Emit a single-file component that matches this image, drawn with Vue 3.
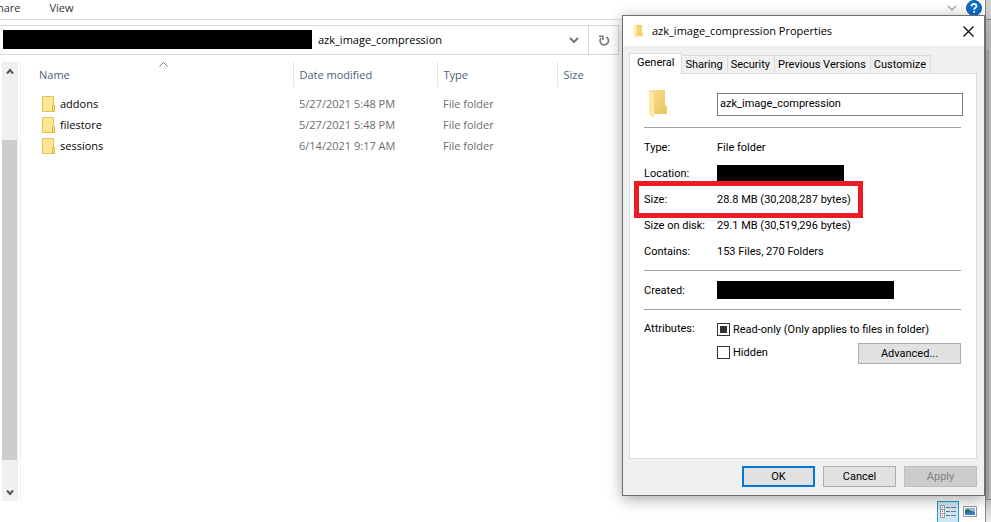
<script setup>
import { ref } from 'vue'

const files = [
  { name: 'addons', date: '5/27/2021 5:48 PM', type: 'File folder' },
  { name: 'filestore', date: '5/27/2021 5:48 PM', type: 'File folder' },
  { name: 'sessions', date: '6/14/2021 9:17 AM', type: 'File folder' },
]
const tabs = ['General', 'Sharing', 'Security', 'Previous Versions', 'Customize']
const activeTab = ref('General')
const folderName = ref('azk_image_compression')
const hidden = ref(false)
</script>

<template>
  <div class="desktop">
    <main class="explorer">
      <nav class="ribbon">
        <a href="#" class="share">hare</a>
        <a href="#">View</a>
        <span class="ribbon-tools">
          <svg width="10" height="6" viewBox="0 0 10 6"><path d="M1 1l4 4 4-4" fill="none" stroke="#a8a8a8" stroke-width="1.5" /></svg>
          <svg width="16" height="16" viewBox="0 0 16 16">
            <circle cx="8" cy="8" r="7.5" fill="#0b6fcb" stroke="#0858a8" />
            <path d="M5.6 6.2C5.6 3.3 10.5 3.3 10.5 6c0 1.8-2.4 1.8-2.4 3.7M8.1 10.9v1.9" fill="none" stroke="#fff" stroke-width="1.8" />
          </svg>
        </span>
      </nav>

      <div class="address-row">
        <div class="address">
          <span class="redacted path"></span>
          <span class="crumb">azk_image_compression</span>
          <svg class="drop" width="10" height="7" viewBox="0 0 10 7"><path d="M1 1l4 4 4-4" fill="none" stroke="#777" stroke-width="2" /></svg>
          <button class="refresh" aria-label="Refresh">
            <svg width="12" height="13" viewBox="0 0 12 13">
              <path d="M8.300 3A4.200 4.200 0 1 1 3 4" fill="none" stroke="#777" stroke-width="1.600" />
              <path d="M1 2.300h4v4" fill="none" stroke="#777" stroke-width="1.600" />
            </svg>
          </button>
        </div>
      </div>

      <div class="content">
        <div class="scrollbar">
          <svg width="8" height="7" viewBox="0 0 8 7"><path d="M1 5.500l3-3.500 3 3.500" fill="none" stroke="#555" stroke-width="2" /></svg>
          <span class="thumb"></span>
          <svg width="8" height="7" viewBox="0 0 8 7"><path d="M1 1.500l3 3.500 3-3.500" fill="none" stroke="#555" stroke-width="2" /></svg>
        </div>
        <div class="list">
          <table>
            <colgroup><col class="c-name" /><col class="c-date" /><col class="c-type" /><col /></colgroup>
            <thead>
              <tr>
                <th class="sorted">
                  Name
                  <svg class="sort" width="9" height="5" viewBox="0 0 9 5"><path d="M.5 4.500l4-4 4 4" fill="none" stroke="#777" /></svg>
                </th>
                <th>Date modified</th><th>Type</th><th>Size</th>
              </tr>
            </thead>
            <tbody>
              <tr v-for="f in files" :key="f.name">
                <td>
                  <span class="file">
                    <svg width="13" height="16" viewBox="0 0 13 16">
                      <path d="M.5.5h11v15H.5z" fill="#ffe595" stroke="#e9c24c" />
                      <path d="M10.500 9.500h2v6h-2z" fill="#ffe28a" stroke="#e3b63b" />
                    </svg>
                    {{ f.name }}
                  </span>
                </td>
                <td>{{ f.date }}</td><td>{{ f.type }}</td><td></td>
              </tr>
            </tbody>
          </table>
        </div>
      </div>

      <footer class="status">
        <button class="view on" aria-label="Details">
          <svg width="16" height="14" viewBox="0 0 16 14">
            <path d="M.5.5h4v12h-4zM.5 4.500h4M.5 8.500h4" fill="#fff" stroke="#999" />
            <path d="M6 2.500h4m1 0h5M6 6.500h4m1 0h5M6 10.500h4m1 0h5" stroke="#777" />
            <path d="M2 2h1v1H2z" fill="#555" /><path d="M2 6h1v1H2z" fill="#2875d0" /><path d="M2 10h1v1H2z" fill="#d33" />
          </svg>
        </button>
        <button class="view" aria-label="Large icons">
          <svg width="14" height="11" viewBox="0 0 14 11">
            <path d="M.5.5h13v10H.5z" fill="#fff" stroke="#999" />
            <path d="M2 2h10v7H2z" fill="#8fc0ee" /><path d="M2 4l3-1 3 2 4 1v1H2z" fill="#3d6d68" /><path d="M2 7l10-1v3H2z" fill="#3a7fc9" />
          </svg>
        </button>
      </footer>
    </main>

    <aside class="behind"><span class="behind-top"></span><span class="behind-line"></span><span class="behind-body"></span><span class="behind-foot"></span></aside>

    <section class="dialog" role="dialog" aria-labelledby="dlg-title">
      <header class="titlebar">
        <svg width="9" height="13" viewBox="0 0 18 28" preserveAspectRatio="none">
          <path d="M3 0h13v16l2 2v6H5z" fill="#f5d272" /><path d="M0 0l6 4v24l-6-4z" fill="#ffe9a8" />
        </svg>
        <h1 id="dlg-title">azk_image_compression Properties</h1>
        <button class="close" aria-label="Close">
          <svg width="11" height="11" viewBox="0 0 11 11"><path d="M.5.5l10 10M10.500.5l-10 10" stroke="#000" stroke-width="1.200" /></svg>
        </button>
      </header>

      <div class="tabs" role="tablist">
        <button v-for="t in tabs" :key="t" role="tab" :class="{ active: t === activeTab }" @click="activeTab = t">{{ t }}</button>
      </div>

      <div class="panel">
        <div class="name-row">
          <svg width="19" height="28" viewBox="0 0 19 28">
            <defs><linearGradient id="fold" x2="1" y2="1"><stop stop-color="#fae08e" /><stop offset="1" stop-color="#eac45d" /></linearGradient></defs>
            <path d="M1 0h15v15l2 2v7H5z" fill="url(#fold)" /><path d="M0 0l5 4v24l-5-4z" fill="#ffe8a6" />
          </svg>
          <input v-model="folderName" type="text" aria-label="Folder name" />
        </div>
        <hr />
        <dl>
          <div><dt>Type:</dt><dd>File folder</dd></div>
          <div><dt>Location:</dt><dd class="redacted location"></dd></div>
          <div class="marked"><dt>Size:</dt><dd>28.8 MB (30,208,287 bytes)</dd></div>
          <div><dt>Size on disk:</dt><dd>29.1 MB (30,519,296 bytes)</dd></div>
          <div><dt>Contains:</dt><dd>153 Files, 270 Folders</dd></div>
        </dl>
        <hr />
        <dl><div><dt>Created:</dt><dd class="redacted created"></dd></div></dl>
        <hr />
        <div class="attributes">
          <span class="attr-label">Attributes:</span>
          <div class="checks">
            <label><input type="checkbox" :indeterminate.prop="true" />Read-only (Only applies to files in folder)</label>
            <div class="hidden-row">
              <label><input v-model="hidden" type="checkbox" />Hidden</label>
              <button class="btn advanced">Advanced...</button>
            </div>
          </div>
        </div>
      </div>

      <div class="actions">
        <button class="btn default">OK</button>
        <button class="btn">Cancel</button>
        <button class="btn" disabled>Apply</button>
      </div>
    </section>
  </div>
</template>

<style>
body { margin: 0; background: #fff; }
</style>

<style scoped>
*, *::before, *::after { box-sizing: border-box; }
.desktop {
  position: relative; display: flex; min-height: 100vh; overflow: hidden;
  font: 11px/16px "Open Sans", "Noto Sans", sans-serif; color: #000;
}
button, input { font: inherit; color: inherit; margin: 0; }
svg { flex: none; display: block; }
.explorer { flex: 1; display: flex; flex-direction: column; min-width: 0; }
.ribbon { display: flex; align-items: center; gap: 29px; height: 20px; padding-bottom: 4px; border-bottom: 1px solid #dadbdc; }
.ribbon a { color: #333; text-decoration: none; }
.share { margin-left: -3px; }
.ribbon-tools { display: flex; align-items: center; gap: 9px; margin-left: auto; padding-right: 3px; }
.address-row { padding: 5px 366px 7px 0; }
.address { display: flex; align-items: center; height: 30px; border: 1px solid #d9d9d9; border-left: 0; }
.redacted { background: #000; }
.path { width: 309px; height: 19px; margin: 0 6px 2px 3px; }
.crumb { flex: 1; }
.drop { margin-right: 9px; }
.refresh { align-self: stretch; width: 30px; display: grid; place-items: center; border: 0; border-left: 1px solid #d9d9d9; background: #fff; padding: 0; }
.content { flex: 1; display: flex; padding-left: 2px; }
.scrollbar { width: 16px; margin-right: 2px; background: #f0f0f0; display: flex; flex-direction: column; align-items: center; padding: 6px 1px 5px 0; }
.thumb { flex: 1; align-self: stretch; margin: 65px 0 29px; background: #cdcdcd; }
.list { flex: 1; border-left: 1px solid #f0f0f0; }
table { width: 100%; border-collapse: collapse; table-layout: fixed; }
.c-name { width: 272px; }
.c-date { width: 144px; }
.c-type { width: 120px; }
th { position: relative; height: 25px; padding: 0 6px; text-align: left; font-weight: 400; color: #4c607a; border-right: 1px solid #e5e5e5; }
th:last-child { border: 0; }
th:first-child { padding-left: 18px; }
.sort { position: absolute; top: 0; left: 51%; }
tbody::before { content: ""; display: block; height: 6px; }
td { height: 21px; padding: 0 6px; color: #6d6d6d; }
td:first-child { padding-left: 21px; color: #000; }
.file { display: flex; align-items: center; gap: 5px; }
.status { display: flex; align-items: center; justify-content: flex-end; gap: 4px; height: 21px; padding-right: 8px; }
.view { border: 0; background: none; padding: 0; }
.view.on { height: 21px; width: 22px; display: grid; place-items: center; border: 1px solid #2b9acb; border-bottom: 0; background: #cbe8f6; }
.behind { width: 6px; display: flex; flex-direction: column; background: #b0b0b0; border-left: 1px solid #858585; }
.behind-top { height: 19px; background: #d0d0d0; }
.behind-line { height: 31px; background: #c4c4c4; border-top: 1px solid #858585; }
.behind-body { flex: 1; border-right: 2px solid #c4c4c4; }
.behind-foot { height: 23px; background: linear-gradient(#c4c4c4, #ececec); border-top: 1px solid #8a8a8a; }

.dialog {
  position: absolute; top: 15px; right: 6px; width: 363px;
  border: 1px solid #6e6e6e; background: #f0f0f0; box-shadow: 0 3px 14px rgba(0, 0, 0, .35);
  font: 11px/16px Roboto, "Liberation Sans", sans-serif;
}
.titlebar { display: flex; align-items: center; gap: 9px; height: 30px; padding: 0 10px 0 11px; background: #fff; }
h1 { flex: 1; margin: 0; font: 11px/16px "Open Sans", "Noto Sans", sans-serif; }
.close { border: 0; background: none; padding: 0; }
.tabs { display: flex; align-items: flex-end; padding: 7px 6px 0; position: relative; }
.tabs button { height: 18px; padding: 1px 4px 0 3px; border: 1px solid #dcdcdc; border-width: 1px 1px 0 0; background: #f0f0f0; white-space: nowrap; }
.tabs .active { height: 21px; margin-bottom: -1px; padding: 0 7px 2px; border-left-width: 1px; background: #fff; }
.panel { height: 386px; margin: 0 7px 0 6px; padding: 16px 15px 0 14px; border: 1px solid #dcdcdc; background: #fff; }
.name-row { display: flex; align-items: flex-start; justify-content: space-between; padding: 0 0 0 5px; margin-right: -2px; }
.name-row input { width: 246px; height: 23px; margin: 3px 0 0; padding: 0 2px 3px; border: 1px solid #7a7a7a; background: #fff; }
hr { margin: 6px 0; border: 0; border-top: 1px solid #a0a0a0; }
.name-row + hr { margin-top: 9px; }
dl { margin: 0; }
dl div { position: relative; display: flex; align-items: center; height: 26px; }
dt { width: 73px; }
dt, dd:not(.redacted) { padding-top: 2px; }
dd { margin: 0; }
.location { width: 127px; height: 16px; }
.created { width: 177px; height: 18px; }
.marked::after { content: ""; position: absolute; inset: -5px auto -6px -10px; width: 229px; border: 5px solid #ed1c24; }
.attributes { display: flex; }
.attr-label { width: 73px; line-height: 26px; }
.checks { flex: 1; padding-top: 2px; }
label { display: flex; align-items: center; gap: 3px; height: 23px; white-space: nowrap; }
input[type="checkbox"] { appearance: none; width: 13px; height: 13px; border: 1px solid #333; background: #fff; }
input[type="checkbox"]:indeterminate { background: #333; box-shadow: inset 0 0 0 2px #fff; }
.hidden-row { display: flex; justify-content: space-between; align-items: flex-end; }
.btn { width: 73px; height: 21px; padding: 0; border: 1px solid #adadad; background: #e1e1e1; }
.btn.advanced { width: 103px; }
.btn.default { border: 2px solid #0078d7; }
.btn:disabled { border-color: #bfbfbf; background: #ccc; color: #838383; }
.actions { display: flex; justify-content: flex-end; gap: 8px; padding: 7px 7px 8px; }
</style>
